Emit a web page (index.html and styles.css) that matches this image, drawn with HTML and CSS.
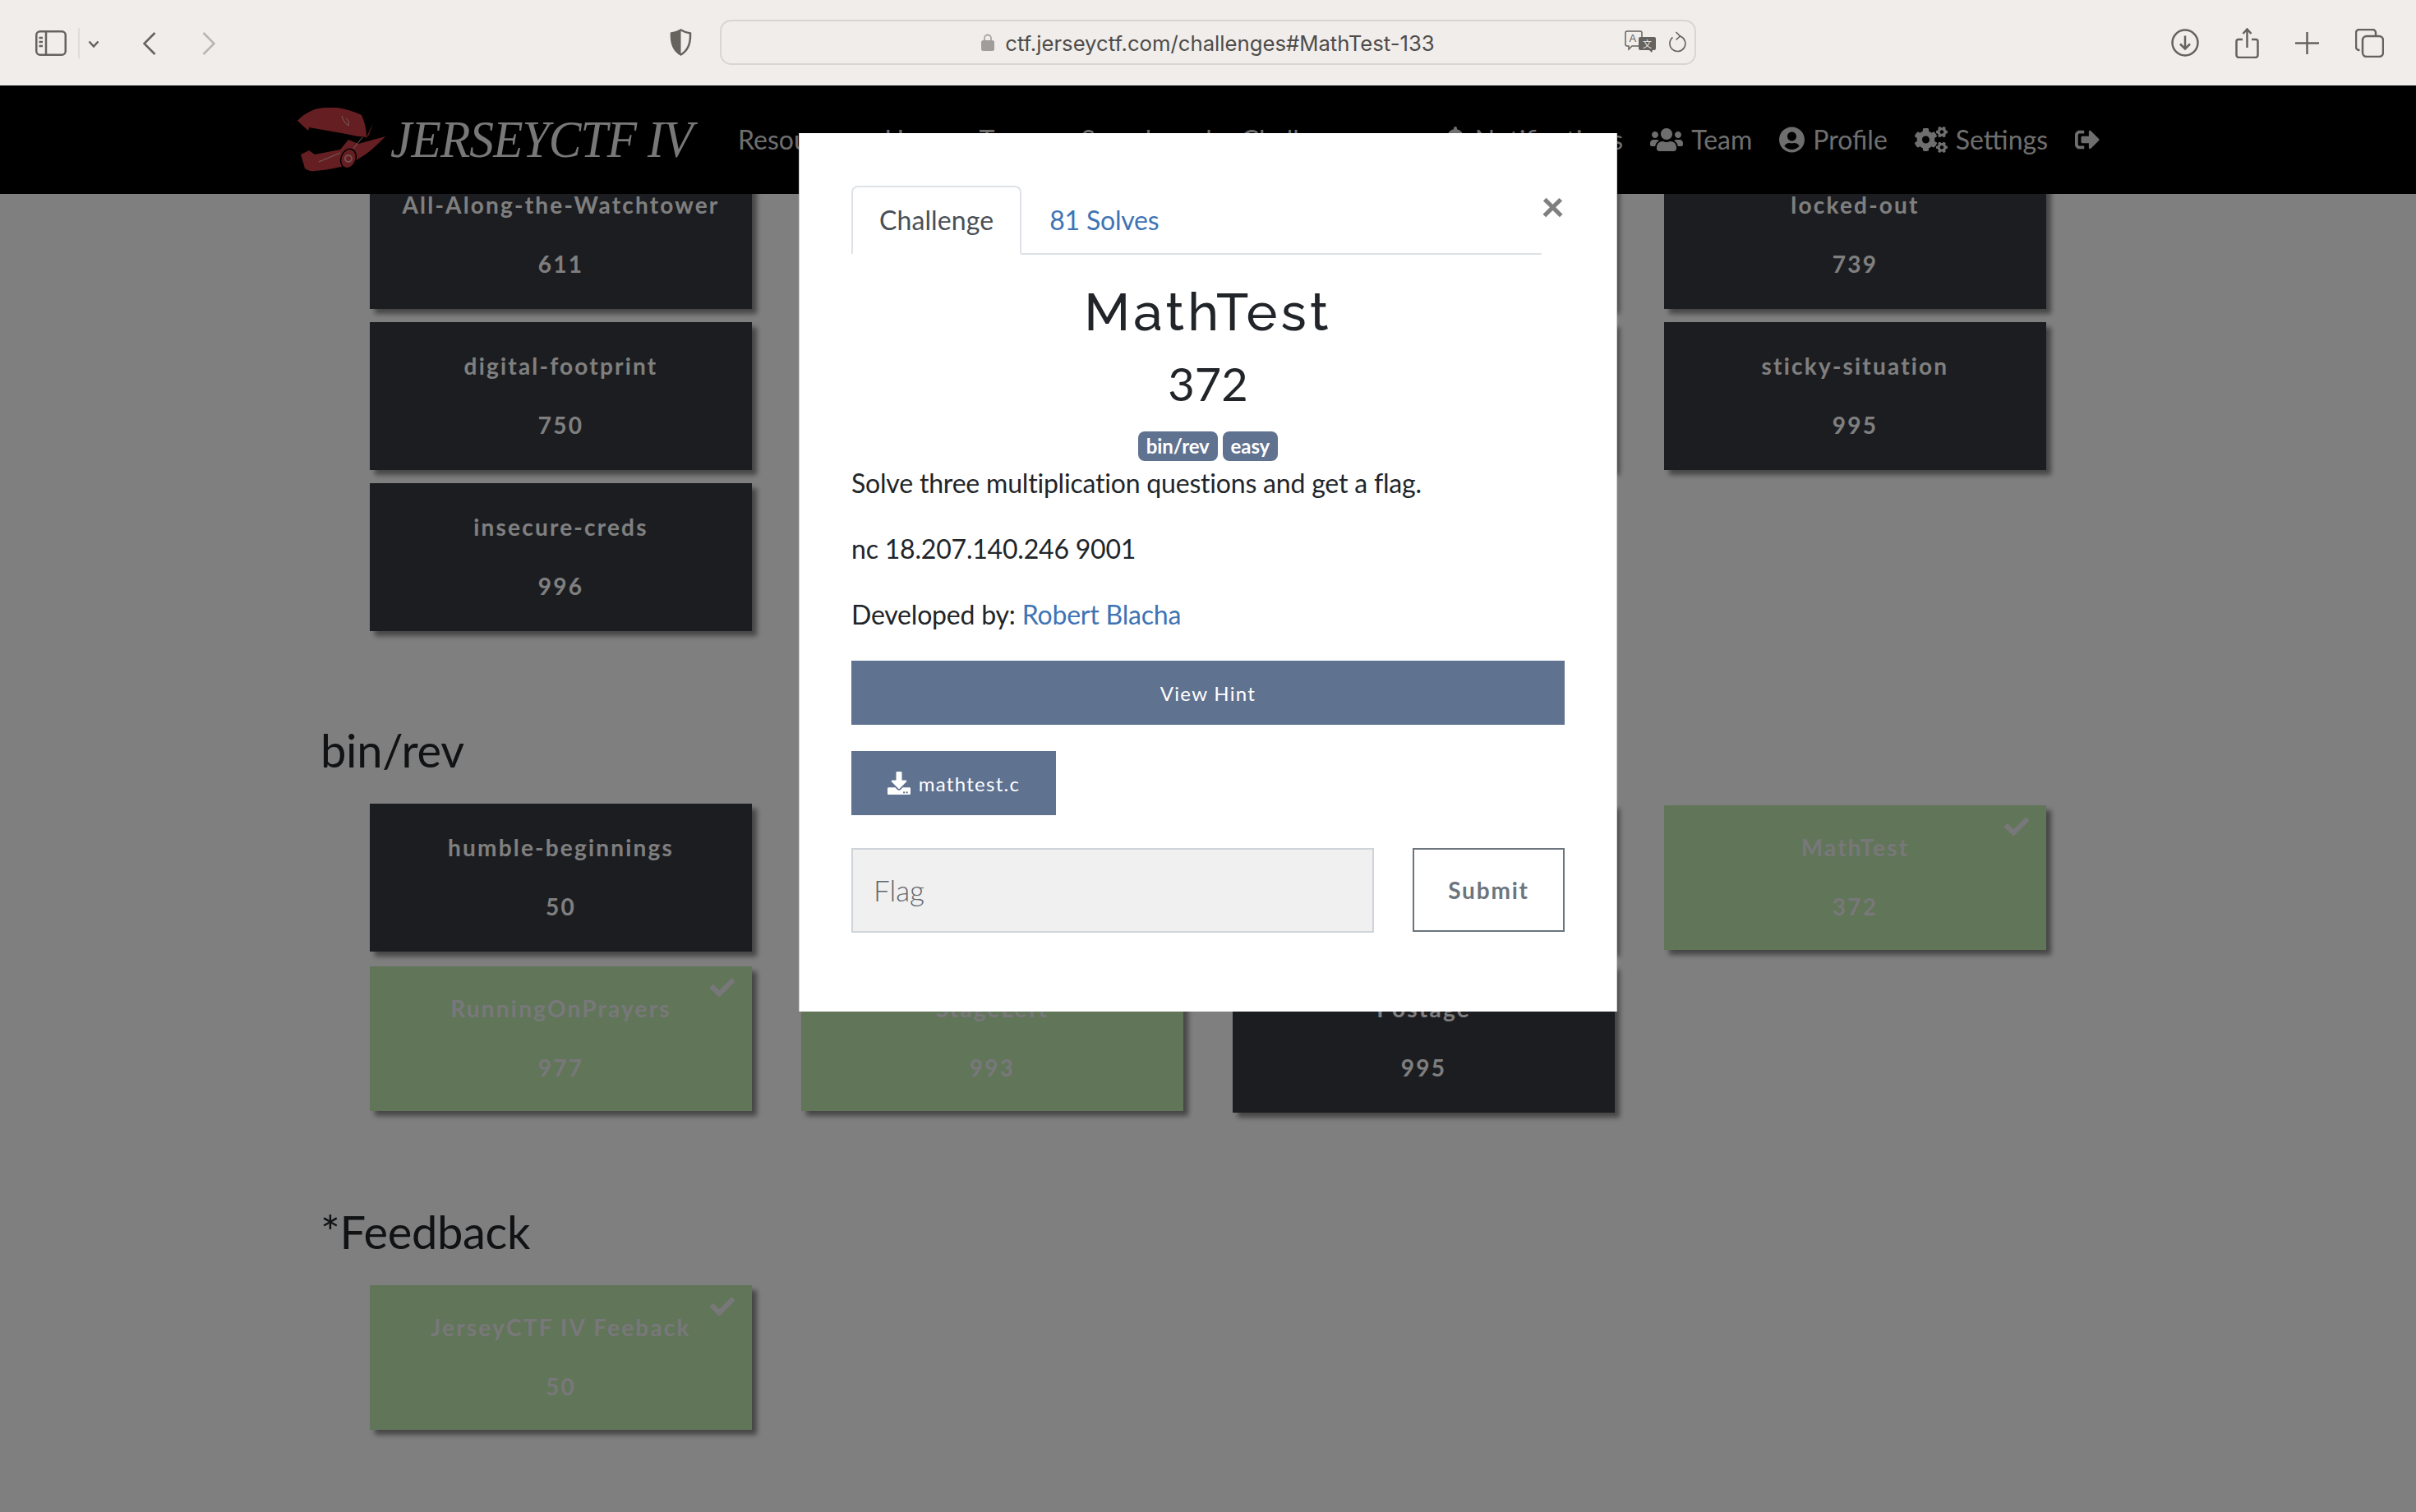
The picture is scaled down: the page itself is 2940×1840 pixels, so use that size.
FILE: index.html
```html
<!DOCTYPE html>
<html>
<head>
    <title>JerseyCTF IV - Challenges</title>
    <link rel="stylesheet" href="styles.css">
</head>
<body>
<svg class="defs" width="0" height="0">
    <symbol id="i-check" viewBox="0 0 512 512"><path d="M173.898 439.404l-166.4-166.4c-9.997-9.997-9.997-26.206 0-36.204l36.203-36.204c9.997-9.998 26.207-9.998 36.204 0L192 312.69 432.095 72.596c9.997-9.997 26.207-9.997 36.204 0l36.203 36.204c9.997 9.997 9.997 26.206 0 36.204l-294.4 294.401c-9.998 9.997-26.207 9.997-36.204-.001z"/></symbol>
</svg>

<header class="toolbar">
    <div class="toolbar-left">
        <svg class="tb-sidebar" width="38" height="31" viewBox="0 0 38 31"><rect x="1.25" y="1.25" width="35.5" height="28.5" rx="4.5"/><path d="M13 1v29M4.5 9H9M4.5 14H9M4.5 19H9"/></svg>
        <span class="tb-sep"></span>
        <svg class="tb-down" width="14" height="9" viewBox="0 0 14 9"><path d="M1.5 1.5L7 7.5l5.5-6"/></svg>
        <svg class="tb-back" width="16" height="28" viewBox="0 0 16 28"><path d="M14.5 1L1.5 14l13 13"/></svg>
        <svg class="tb-forward" width="16" height="28" viewBox="0 0 16 28"><path d="M1.5 1l13 13-13 13"/></svg>
        <svg class="tb-shield" width="27" height="33" viewBox="0 0 27 33"><path d="M13.5 1.5C10 3.500 6 5 2 5.500 1.500 16 3.500 26 13.500 31.500 23.500 26 25.500 16 25 5.500 21 5 17 3.500 13.500 1.500z"/><path class="fill" d="M13.500 1.500C10 3.500 6 5 2 5.500 1.500 16 3.500 26 13.500 31.500z"/></svg>
    </div>
    <div class="address">
        <svg class="lock" width="16" height="21" viewBox="0 0 16 21"><path d="M4 9V5.500a4 4 0 0 1 8 0V9" fill="none" stroke="#a8a5a2" stroke-width="1.800"/><rect y="8" width="16" height="13" rx="2.500" fill="#a09d9a"/></svg>
        <span class="url">ctf.jerseyctf.com/challenges#MathTest-133</span>
        <div class="address-tools">
            <svg width="38" height="27" viewBox="0 0 38 27"><path d="M3 1h16a2 2 0 0 1 2 2v14a2 2 0 0 1-2 2H9l-4 4v-4H3a2 2 0 0 1-2-2V3a2 2 0 0 1 2-2z" fill="none" stroke="#66625e" stroke-width="1.500"/><text x="5.500" y="14" class="tr-a">A</text><path d="M19 8h17a2 2 0 0 1 2 2v12a2 2 0 0 1-2 2h-2l-1 3-3-3H19a2 2 0 0 1-2-2V10a2 2 0 0 1 2-2z" fill="#66625e"/><text x="22" y="21" class="tr-b">文</text></svg>
            <svg class="tb-refresh" width="22" height="26" viewBox="0 0 22 26"><path d="M14.500 6a9.500 9.500 0 1 1-9 1.500"/><path d="M9.500 1l5 5-5 4.500"/></svg>
        </div>
    </div>
    <div class="toolbar-right">
        <svg class="tb-line" width="34" height="34" viewBox="0 0 34 34"><circle cx="17" cy="17" r="15.500"/><path d="M17 8.500v16M11 18.500l6 6 6-6"/></svg>
        <svg class="tb-line" width="29" height="37" viewBox="0 0 29 37"><path d="M9 14H4a2.500 2.500 0 0 0-2.500 2.500V33A3 3 0 0 0 4.500 36h20a3 3 0 0 0 3-3V16.500A2.500 2.500 0 0 0 25 14h-5M14.500 24V2M9.500 7l5-5.500 5 5.500"/></svg>
        <svg class="tb-line" width="29" height="27" viewBox="0 0 29 27"><path d="M14.500 0v27M0 13.500h29"/></svg>
        <svg class="tb-line" width="35" height="35" viewBox="0 0 35 35"><rect x="9" y="9" width="25" height="25" rx="5"/><path d="M5.500 26H5a4 4 0 0 1-4-4V5a4 4 0 0 1 4-4h16a4 4 0 0 1 4 4v3.500"/></svg>
    </div>
</header>

<nav class="navbar">
    <a class="brand">
        <svg width="107" height="78" viewBox="0 0 107 78">
            <path class="helmet" d="M0 16C6 9 14 5 21 2 33-1 48-1 58 2 70 5 76 8 78 9 82 18 84 27 84 36 75 35 67 34 59 32L14 24 13 28z"/>
            <path class="helmet" d="M92 19L83 38 87 33z"/>
            <path class="helmet" d="M107 35C100 42 92 50 84 56L64 69C50 73 35 76 21 77 16 78 12 76 9 74L4 57 14 52 21 57 52 51 62 39 74 44z"/>
            <ellipse class="helmet-ring" cx="62" cy="62" rx="9" ry="12" transform="rotate(20 62 62)"/>
            <circle class="helmet-dot" cx="62" cy="62" r="4"/>
            <path class="helmet-mark" d="M54 10c1 5 4 9 8 12 1-4 0-7-3-9M68 50L79 36M26 66l26-11"/>
        </svg>
        <span class="brand-name">JERSEYCTF IV</span>
    </a>
    <div class="nav-links">
        <a>Resources</a>
        <a>Users</a>
        <a>Teams</a>
        <a>Scoreboard</a>
        <a>Challenges</a>
    </div>
    <div class="nav-links nav-right">
        <a><svg width="28" height="32" viewBox="0 0 448 512"><path d="M224 512c35.320 0 63.970-28.650 63.970-64H160.030c0 35.350 28.650 64 63.970 64zm215.390-149.710c-19.320-20.760-55.470-51.990-55.470-154.290 0-77.700-54.480-139.900-127.940-155.160V32c0-17.670-14.320-32-31.980-32s-31.980 14.330-31.980 32v20.840C118.560 68.100 64.080 130.300 64.080 208c0 102.300-36.150 133.530-55.470 154.290-6 6.450-8.660 14.160-8.610 21.710.11 16.400 12.980 32 32.100 32h383.800c19.120 0 32-15.600 32.100-32 .05-7.550-2.610-15.270-8.610-21.710z"/></svg>Notifications</a>
        <a><svg width="40" height="32" viewBox="0 0 640 512"><path d="M96 224c35.300 0 64-28.700 64-64s-28.700-64-64-64-64 28.700-64 64 28.700 64 64 64zm448 0c35.300 0 64-28.700 64-64s-28.700-64-64-64-64 28.700-64 64 28.700 64 64 64zm32 32h-64c-17.600 0-33.500 7.100-45.100 18.600 40.300 22.100 68.900 62 75.100 109.400h66c17.700 0 32-14.300 32-32v-32c0-35.300-28.700-64-64-64zm-256 0c61.900 0 112-50.100 112-112S381.900 32 320 32 208 82.100 208 144s50.100 112 112 112zm76.800 32h-8.300c-20.800 10-43.900 16-68.500 16s-47.600-6-68.500-16h-8.300C179.600 288 128 339.600 128 403.200V432c0 26.500 21.500 48 48 48h288c26.500 0 48-21.500 48-48v-28.800c0-63.600-51.600-115.200-115.200-115.200zm-223.700-13.400C161.500 263.100 145.600 256 128 256H64c-35.300 0-64 28.700-64 64v32c0 17.700 14.300 32 32 32h65.900c6.300-47.400 34.900-87.300 75.200-109.400z"/></svg>Team</a>
        <a><svg width="31" height="32" viewBox="0 0 496 512"><path d="M248 8C111 8 0 119 0 256s111 248 248 248 248-111 248-248S385 8 248 8zm0 96c48.600 0 88 39.400 88 88s-39.400 88-88 88-88-39.400-88-88 39.400-88 88-88zm0 344c-58.700 0-111.300-26.600-146.500-68.200 18.800-35.400 55.600-59.800 98.500-59.800 2.400 0 4.800.4 7.100 1.100 13 4.200 26.600 6.900 40.900 6.900 14.300 0 28-2.700 40.900-6.900 2.300-.7 4.700-1.100 7.100-1.100 42.900 0 79.700 24.400 98.500 59.800C359.300 421.400 306.700 448 248 448z"/></svg>Profile</a>
        <a><svg width="40" height="32" viewBox="0 0 640 512"><path d="M512.100 191l-8.200 14.300c-3 5.300-9.400 7.500-15.100 5.400-11.800-4.400-22.600-10.700-32.100-18.600-4.600-3.800-5.800-10.500-2.800-15.700l8.200-14.300c-6.900-8-12.300-17.300-15.900-27.400h-16.500c-6 0-11.200-4.300-12.200-10.300-2-12-2.100-24.600 0-37.100 1-6 6.200-10.400 12.200-10.400h16.500c3.600-10.100 9-19.400 15.900-27.400l-8.200-14.300c-3-5.200-1.900-11.900 2.800-15.700 9.500-7.900 20.400-14.200 32.100-18.600 5.700-2.100 12.100.1 15.100 5.400l8.200 14.300c10.500-1.900 21.200-1.900 31.700 0L552 6.300c3-5.300 9.400-7.500 15.100-5.400 11.800 4.400 22.600 10.700 32.100 18.600 4.600 3.800 5.800 10.500 2.800 15.700l-8.200 14.300c6.900 8 12.300 17.300 15.900 27.400h16.500c6 0 11.200 4.300 12.200 10.300 2 12 2.100 24.600 0 37.100-1 6-6.200 10.400-12.200 10.400h-16.500c-3.600 10.100-9 19.400-15.900 27.400l8.200 14.300c3 5.200 1.900 11.900-2.800 15.700-9.500 7.900-20.400 14.200-32.100 18.600-5.700 2.100-12.100-.1-15.100-5.400l-8.200-14.300c-10.400 1.900-21.200 1.900-31.700 0zm-10.500-58.800c38.500 29.600 82.400-14.300 52.800-52.800-38.500-29.700-82.400 14.300-52.800 52.800zM386.300 286.100l33.700 16.800c10.100 5.800 14.500 18.100 10.500 29.100-8.900 24.200-26.400 46.400-42.600 65.800-7.400 8.900-20.200 11.100-30.300 5.300l-29.100-16.800c-16 13.700-34.600 24.600-54.900 31.700v33.600c0 11.600-8.300 21.600-19.700 23.600-24.600 4.200-50.400 4.400-75.900 0-11.500-2-20-11.900-20-23.600V418c-20.300-7.200-38.900-18-54.900-31.700L74 403c-10 5.800-22.900 3.600-30.300-5.300-16.200-19.400-33.300-41.600-42.200-65.700-4-10.900.4-23.200 10.500-29.100l33.300-16.800c-3.900-20.900-3.900-42.400 0-63.400L12 205.800c-10.100-5.800-14.600-18.100-10.500-29 8.900-24.200 26-46.400 42.200-65.800 7.400-8.900 20.200-11.100 30.300-5.300l29.100 16.800c16-13.700 34.600-24.600 54.900-31.700V57.100c0-11.500 8.200-21.500 19.600-23.500 24.600-4.200 50.500-4.400 76-.1 11.500 2 20 11.900 20 23.600v33.600c20.300 7.200 38.900 18 54.900 31.700l29.100-16.800c10-5.800 22.900-3.600 30.300 5.300 16.200 19.400 33.200 41.600 42.100 65.800 4 10.900.1 23.200-10 29.100l-33.700 16.800c3.900 21 3.900 42.500 0 63.500zm-117.600 21.100c59.200-77-28.700-164.900-105.700-105.700-59.200 77 28.700 164.900 105.700 105.700zm243.400 182.700l-8.200 14.300c-3 5.300-9.400 7.500-15.100 5.400-11.800-4.400-22.600-10.700-32.100-18.600-4.600-3.800-5.800-10.500-2.800-15.700l8.200-14.300c-6.900-8-12.300-17.300-15.900-27.400h-16.500c-6 0-11.200-4.300-12.200-10.300-2-12-2.100-24.600 0-37.100 1-6 6.200-10.400 12.200-10.400h16.500c3.600-10.100 9-19.400 15.900-27.400l-8.200-14.300c-3-5.200-1.900-11.900 2.800-15.700 9.500-7.900 20.400-14.200 32.100-18.600 5.700-2.100 12.100.1 15.100 5.400l8.200 14.300c10.500-1.900 21.200-1.900 31.700 0l8.200-14.300c3-5.300 9.400-7.500 15.100-5.400 11.800 4.400 22.600 10.700 32.100 18.600 4.600 3.800 5.800 10.500 2.800 15.700l-8.200 14.300c6.900 8 12.300 17.300 15.900 27.400h16.500c6 0 11.200 4.300 12.200 10.300 2 12 2.100 24.600 0 37.100-1 6-6.200 10.400-12.200 10.400h-16.500c-3.600 10.100-9 19.400-15.900 27.400l8.200 14.300c3 5.200 1.900 11.900-2.800 15.700-9.500 7.900-20.400 14.200-32.100 18.600-5.700 2.100-12.100-.1-15.100-5.400l-8.200-14.300c-10.400 1.900-21.200 1.900-31.700 0zM501.600 431c38.500 29.600 82.400-14.300 52.800-52.800-38.500-29.600-82.400 14.300-52.800 52.800z"/></svg>Settings</a>
        <a><svg width="30" height="30" viewBox="0 0 512 512"><path d="M497 273L329 441c-15 15-41 4.500-41-17v-96H152c-13.300 0-24-10.700-24-24v-96c0-13.300 10.700-24 24-24h136V88c0-21.400 25.900-32 41-17l168 168c9.300 9.400 9.300 24.600 0 34zM192 436v-40c0-6.600-5.400-12-12-12H96c-17.700 0-32-14.300-32-32V160c0-17.700 14.300-32 32-32h84c6.600 0 12-5.400 12-12V76c0-6.600-5.400-12-12-12H96c-53 0-96 43-96 96v192c0 53 43 96 96 96h84c6.600 0 12-5.400 12-12z"/></svg></a>
    </div>
</nav>

<main class="board">
    <section class="category">
        <div class="cards">
            <div class="card"><p>All-Along-the-Watchtower</p><p>611</p></div>
            <div class="card"></div>
            <div class="card"></div>
            <div class="card"><p>locked-out</p><p>739</p></div>
            <div class="card"><p>digital-footprint</p><p>750</p></div>
            <div class="card"></div>
            <div class="card"></div>
            <div class="card"><p>sticky-situation</p><p>995</p></div>
            <div class="card"><p>insecure-creds</p><p>996</p></div>
        </div>
    </section>
    <section class="category">
        <h3>bin/rev</h3>
        <div class="cards">
            <div class="card"><p>humble-beginnings</p><p>50</p></div>
            <div class="card"></div>
            <div class="card"></div>
            <div class="card solved"><svg class="tick"><use href="#i-check"/></svg><p>MathTest</p><p>372</p></div>
            <div class="card solved"><svg class="tick"><use href="#i-check"/></svg><p>RunningOnPrayers</p><p>977</p></div>
            <div class="card solved"><svg class="tick"><use href="#i-check"/></svg><p>StageLeft</p><p>993</p></div>
            <div class="card"><p>Postage</p><p>995</p></div>
        </div>
    </section>
    <section class="category">
        <h3>*Feedback</h3>
        <div class="cards">
            <div class="card solved"><svg class="tick"><use href="#i-check"/></svg><p>JerseyCTF IV Feeback</p><p>50</p></div>
        </div>
    </section>
</main>

<div class="backdrop">
    <div class="modal">
        <button class="close" aria-label="Close">×</button>
        <ul class="tabs">
            <li class="tab active">Challenge</li>
            <li class="tab">81 Solves</li>
        </ul>
        <h2 class="chal-name">MathTest</h2>
        <h3 class="chal-value">372</h3>
        <div class="tags">
            <span class="tag">bin/rev</span>
            <span class="tag">easy</span>
        </div>
        <div class="desc">
            <p>Solve three multiplication questions and get a flag.</p>
            <p>nc 18.207.140.246 9001</p>
            <p>Developed by: <a>Robert Blacha</a></p>
        </div>
        <button class="btn btn-hint">View Hint</button>
        <div class="files">
            <button class="btn btn-file"><svg width="28" height="28" viewBox="0 0 512 512"><path d="M216 0h80c13.300 0 24 10.700 24 24v168h87.700c17.800 0 26.700 21.500 14.100 34.100L269.700 378.300c-7.500 7.500-19.800 7.500-27.300 0L90.100 226.100c-12.600-12.600-3.700-34.100 14.100-34.100H192V24c0-13.300 10.700-24 24-24zm296 376v112c0 13.300-10.700 24-24 24H24c-13.300 0-24-10.700-24-24V376c0-13.300 10.700-24 24-24h146.700l49 49c20.100 20.100 52.500 20.100 72.600 0l49-49H488c13.300 0 24 10.700 24 24zm-124 88c0-11-9-20-20-20s-20 9-20 20 9 20 20 20 20-9 20-20zm64 0c0-11-9-20-20-20s-20 9-20 20 9 20 20 20 20-9 20-20z"/></svg>mathtest.c</button>
        </div>
        <form class="flag-form">
            <input class="flag-input" placeholder="Flag">
            <button class="btn-submit" type="button">Submit</button>
        </form>
    </div>
</div>
</body>
</html>
```

FILE: styles.css
```css
* { box-sizing: border-box; }
html, body { margin: 0; height: 1840px; overflow: hidden; }
body { background: #fff; color: #212529; font-family: "Lato", "Open Sans", sans-serif; font-size: 32px; line-height: 1.5; }
p, h2, h3, ul { margin: 0; padding: 0; }
.defs { position: absolute; }

/* browser chrome */
.toolbar { height: 104px; background: #f0edea; display: grid; grid-template-columns: 1fr 1188px 1fr; align-items: center; position: relative; z-index: 3; }
.toolbar svg { display: block; flex: none; }
.toolbar-left { display: flex; align-items: center; padding-left: 43px; }
.tb-sidebar { fill: none; stroke: #66625e; stroke-width: 2.5; margin-top: 1px; }
.tb-sep { width: 2px; height: 37px; background: #e0ddd9; margin-left: 14px; margin-right: 10px; }
.tb-down { fill: none; stroke: #66625e; stroke-width: 2.5; margin-top: 2px; }
.tb-back, .tb-forward { fill: none; stroke-width: 2.5; }
.tb-back { stroke: #66625e; margin-left: 53px; margin-top: 2px; }
.tb-forward { stroke: #b8b5b1; margin-left: 56px; margin-top: 2px; }
.tb-shield { fill: none; stroke: #66625e; stroke-width: 2.5; margin-left: auto; margin-right: 34px; margin-top: -2px; }
.tb-shield .fill { fill: #66625e; stroke: none; }
.address { height: 55px; margin-top: -1px; border: 2px solid #d9d6d1; border-radius: 14px; display: flex; align-items: center; justify-content: center; gap: 13px; position: relative; }
.url { font-family: "Inter", "Liberation Sans", sans-serif; font-size: 25.7px; color: #4f4c4a; line-height: 1; margin-top: 2px; }
.address-tools { position: absolute; right: 10px; top: 11px; display: flex; align-items: center; gap: 15px; }
.tr-a { font: 13px "Liberation Sans", sans-serif; fill: #66625e; }
.tr-b { font: 11px "Noto Sans CJK SC", sans-serif; fill: #f0edea; }
.tb-refresh { fill: none; stroke: #66625e; stroke-width: 1.6; }
.toolbar-right { display: flex; align-items: center; justify-content: flex-end; gap: 44px; padding-right: 39px; }
.tb-line { fill: none; stroke: #66625e; stroke-width: 2.5; }

/* ctfd navbar */
.navbar { height: 132px; background: #000; display: flex; align-items: center; padding: 0 385px 0 362px; position: relative; z-index: 2; }
.brand { display: flex; align-items: center; width: 536px; flex: none; }
.helmet { fill: #ca3e44; }
.helmet-ring { fill: #ca3e44; stroke: #000; stroke-width: 1.5; }
.helmet-dot { fill: none; stroke: #e8a0a0; stroke-width: 2; }
.helmet-mark { fill: none; stroke: #e8c4c4; stroke-width: 1; }
.brand-name { font-family: "Liberation Serif", serif; font-style: italic; font-size: 64px; line-height: 1; color: #f0f0f0; letter-spacing: -1px; margin-left: 6px; transform: scaleX(.93); transform-origin: left center; white-space: nowrap; }
.nav-links { display: flex; align-items: center; gap: 36px; color: #dcdcdc; }
.nav-links a { display: flex; align-items: center; gap: 10px; white-space: nowrap; }
.nav-links svg { fill: #dcdcdc; display: block; }
.nav-right { margin-left: auto; gap: 33px; }

/* challenge board */
.board { margin-top: -40px; padding-left: 390px; position: relative; }
.category h3 { font-size: 56px; font-weight: 400; line-height: 67px; margin-bottom: 32px; letter-spacing: -.3px; }
.cards { width: 2100px; display: grid; grid-template-columns: repeat(4, 465px); gap: 16px 60px; padding-left: 60px; margin-bottom: 111px; }
.card { height: 180px; background: #383a42; color: #fff; font-size: 28px; font-weight: 700; letter-spacing: 2.2px; line-height: 42px; text-align: center; display: flex; flex-direction: column; justify-content: center; gap: 30px; padding-bottom: 2px; box-shadow: 6px 6px 6px rgba(0, 0, 0, .45); position: relative; }
.card.solved { height: 176px; align-self: center; background: #c2eab2; color: #f0f0f4; }
.tick { position: absolute; top: 11px; right: 21px; width: 30px; height: 30px; fill: #f0f0f4; }

/* modal */
.backdrop { position: fixed; top: 104px; left: 0; right: 0; bottom: 0; background: rgba(0, 0, 0, .5); display: flex; justify-content: center; align-items: flex-start; padding-top: 58px; z-index: 2; }
.modal { width: 996px; height: 1069px; background: #fff; border-left: 1px solid rgba(0, 0, 0, .2); border-right: 1px solid rgba(0, 0, 0, .2); padding: 64px 63px 0; position: relative; }
.close { position: absolute; top: 63px; right: 63px; background: none; border: 0; padding: 0; font: 900 50px/1 "Lato", sans-serif; color: #808080; }
.tabs { list-style: none; display: flex; width: 840px; border-bottom: 2px solid #dee2e6; height: 84px; }
.tab { padding: 16px 32px 0 32px; color: #3f74b4; height: 84px; border: 2px solid transparent; letter-spacing: -.2px; }
.tab.active { color: #495057; background: #fff; border-color: #dee2e6 #dee2e6 #fff; border-radius: 8px 8px 0 0; letter-spacing: .1px; }
.chal-name { font-family: "Raleway", "Open Sans", sans-serif; font-size: 64px; font-weight: 500; line-height: 77px; text-align: center; margin-top: 31px; letter-spacing: 4.2px; }
.chal-value { font-size: 56px; font-weight: 400; line-height: 67px; text-align: center; margin-top: 15px; }
.tags { display: flex; justify-content: center; gap: 6px; margin-top: 25px; }
.tag { background: #5f7290; color: #fff; font-size: 24px; font-weight: 700; line-height: 36px; padding: 0 10px; border-radius: 8px; letter-spacing: -.1px; }
.desc { margin-top: 3px; letter-spacing: -.2px; }
.desc p { margin-bottom: 32px; }
.desc a { color: #3f74b4; }
.btn { background: #5f7290; color: #fff; border: 0; border-radius: 0; font-family: "Lato", sans-serif; font-size: 24px; letter-spacing: 1.3px; height: 78px; }
.btn-hint { display: block; width: 868px; margin-top: 0; }
.files { margin-top: 32px; }
.btn-file { width: 249px; display: flex; align-items: center; justify-content: center; gap: 10px; }
.btn-file svg { fill: #fff; display: block; }
.flag-form { display: flex; justify-content: space-between; align-items: flex-start; margin-top: 40px; }
.flag-input { width: 636px; height: 103px; background: #f0f0f0; border: 2px solid #ced4da; padding: 0 25px 2px; font: 300 35px "Lato", sans-serif; border-radius: 0; }
.flag-input::placeholder { color: #5f666d; }
.btn-submit { width: 185px; height: 102px; background: #fff; border: 2px solid #6c757d; color: #6c757d; font: 700 28px "Lato", sans-serif; letter-spacing: 1.8px; }
```
